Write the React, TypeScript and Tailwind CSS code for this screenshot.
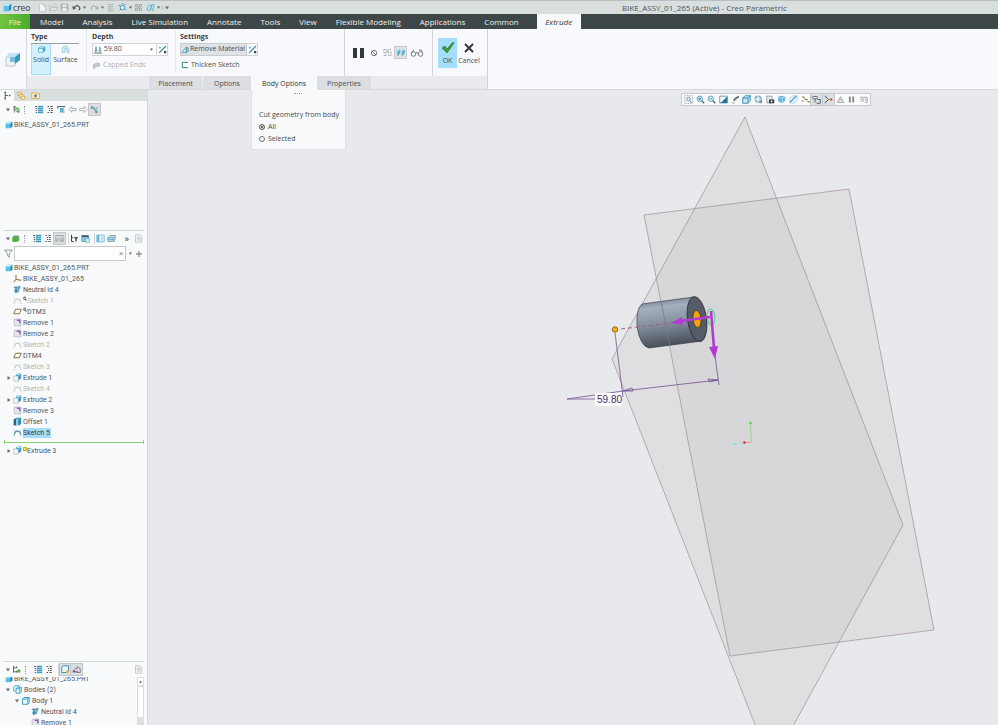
import type { ReactNode } from "react";
import clsx from "clsx";

const icons = {
  cube: (
    <>
      <path d="M1 4 4 1h7v7L8 11H1z" fill="#58bfe6" />
      <path d="M1 4 4 1h7L8 4z" fill="#c3eaf8" />
      <path d="M8 4l3-3v7l-3 3z" fill="#2b88b0" />
    </>
  ),
  cubeOutline: (
    <>
      <path d="M1.500 4.500 4 2h7v5.500L8.500 10h-7z" fill="#48abd2" />
      <path d="M2.500 5.500h5V9h-5z" fill="#fff" />
      <path d="M4.500 3h5L8 4.200H3.200z" fill="#d8f2fb" />
    </>
  ),
  sheet: (
    <path d="M1.500 10V4.500Q2 2 4.500 2H8l2.500 2.500V10H8V5H5v5z" fill="#d5eef7" stroke="#67b3ce" strokeWidth=".7" />
  ),
  newFile: <path d="M2 1h5l3 3v7H2zM7 1v3h3" fill="#f4f6f6" stroke="#b4b9b9" strokeWidth=".8" />,
  open: <path d="M1 10V4h3l1 1h5v1M1 10l2-4h8l-1.500 4zM7 3l2-2 1 2" fill="#e4e7e7" stroke="#adb3b3" strokeWidth=".8" />,
  save: (
    <>
      <path d="M1.500 1.500h9v9h-9z" fill="#b9bfc0" stroke="#959b9d" strokeWidth=".8" />
      <path d="M3.500 2h5v3h-5zM3 7h6v3.500H3z" fill="#eef0f0" />
    </>
  ),
  undo: (
    <>
      <path d="M3 6q3-4 6-1.500t0 5" fill="none" stroke="#444b4d" strokeWidth="1.600" />
      <path d="M.5 4l1 5 4-2.500z" fill="#444b4d" />
    </>
  ),
  redo: (
    <>
      <path d="M9 6q-3-4-6-1.500t0 5" fill="none" stroke="#a3a9aa" strokeWidth="1.300" />
      <path d="M11.500 4l-1 5-4-2.500z" fill="#a3a9aa" />
    </>
  ),
  regen: <path d="M2 2h3M7 2h3M2 5h3M7 5h3M2 8h3M7 8h3M2 10.500h8M6 2v8" stroke="#a7adaf" strokeWidth="1.100" />,
  gearView: (
    <>
      <circle cx="6" cy="6" r="3" fill="#e6f5fb" stroke="#369cc4" strokeWidth="1.300" />
      <path d="M1 3l2 1M9 8l2 1M2 10l2-2M8 3l2-2M5 1h2" stroke="#47727f" strokeWidth="1.100" />
    </>
  ),
  windows: <path d="M2 2h3v3H2zM7 2h3v3H7zM2 7h3v3H2zM7 7h3v3H7zM4 4l4 4" fill="none" stroke="#8a9192" strokeWidth=".9" />,
  planes: (
    <>
      <path d="M1 9l3-6h4L5 10zM6 8l2-6h3L9 9z" fill="#c3e7f5" stroke="#43a7cd" strokeWidth=".9" />
      <path d="M8 11l3-2" stroke="#be9440" />
    </>
  ),
  depth: (
    <>
      <path d="M3 1v7M9 1v7" stroke="#2b6f96" strokeWidth="1.600" />
      <path d="M0 10.500h12" stroke="#4b5559" strokeWidth="1.300" />
      <path d="M1 6.500l2 2 2-2M7 6.500l2 2 2-2" fill="none" stroke="#2b6f96" />
    </>
  ),
  flip: (
    <>
      <path d="M1.500 10.500l9-9" stroke="#2e7397" strokeWidth="1.500" />
      <path d="M1 3.500h3M2.500 2v3" stroke="#4badd3" />
      <path d="M8 8h3v3H8z" fill="#41484b" />
    </>
  ),
  wedge: (
    <>
      <path d="M1 10l7-8.500V10z" fill="#d6f0fa" stroke="#38819f" strokeWidth="1" />
      <path d="M8 1.500l3 1.500v5L8 10z" fill="#74c7e6" stroke="#38819f" strokeWidth=".7" />
    </>
  ),
  thicken: <path d="M10.500 2H2v8h8.500" fill="none" stroke="#39819e" strokeWidth="1.500" />,
  capped: (
    <>
      <path d="M2 5q3-3 8-2v4q-5-1-7 3z" fill="#c5cacc" stroke="#a5abad" strokeWidth=".8" />
      <path d="M2 5v5" stroke="#a5abad" />
    </>
  ),
  none: (
    <>
      <circle cx="6" cy="6" r="4" fill="none" stroke="#62686a" strokeWidth="1.300" />
      <path d="M3 3l6 6" stroke="#62686a" strokeWidth="1.300" />
    </>
  ),
  ghost: <path d="M1 2h4v4H1zM7 2h4M7 2v8M1 10h4M3 7v3M9 5h2v5H8M5 4l3 3" fill="none" stroke="#8d9395" strokeWidth="1" strokeDasharray="1.500 .7" />,
  preview: (
    <>
      <path d="M1 2h4v4L3 10H1l1-4H1zM7 2h4v4l-2 4H7l1-4H7z" fill="#58b9e2" />
      <path d="M1 2h3v2H1zM7 2h3v2H7z" fill="#c4ebf9" />
      <path d="M5 3v3L3 10M11 3v3l-2 4" fill="none" stroke="#247ca5" strokeWidth=".8" />
    </>
  ),
  filterTree: (
    <>
      <path d="M3 1v9M3 5l5 5" stroke="#5b6164" strokeWidth="1.200" />
      <path d="M2 1.500h3v2.500H2zM7 7h3v3H7z" fill="#7a8285" />
      <path d="M7 3l3 4" stroke="#4fb239" strokeWidth="1.600" />
      <circle cx="6" cy="5" r="1.300" fill="#56b63a" />
    </>
  ),
  tree: (
    <>
      <path d="M3 1v10M3 6h4" stroke="#5d6467" strokeWidth="1.300" />
      <path d="M2 2h2M2 10h2M8 6h2" stroke="#5d6467" strokeWidth="2" />
    </>
  ),
  folders: (
    <>
      <path d="M1 2h5v4H1z" fill="#fff0cb" stroke="#d59d35" />
      <path d="M3 4.500h5v4H3z" fill="#fff0cb" stroke="#d59d35" />
      <path d="M5.500 7h5v4h-5z" fill="#fff0cb" stroke="#d59d35" />
    </>
  ),
  favorite: (
    <>
      <path d="M1 2.500h4l1 1h5v6.500H1z" fill="#fff0cb" stroke="#d59d35" />
      <path d="M6 4.500v4M4 6.500h4" stroke="#377fa4" strokeWidth="1.800" />
    </>
  ),
  listBlue: (
    <>
      <path d="M4 2h7M4 4.700h7M4 7.300h7M4 10h7" stroke="#3b9cc2" strokeWidth="1.800" />
      <path d="M0 2h3M1 4.700h2M1 7.300h2M1 10h2" stroke="#525a5d" strokeWidth="1.300" />
    </>
  ),
  listDark: <path d="M2 2h2M6 2h3M4 4.700h1.500M6.500 4.700H9M4 7.300h1.500M6.500 7.300H9M2 10h2M6 10h3" stroke="#555c5f" strokeWidth="1.400" />,
  treeFind: (
    <>
      <path d="M1 2h10M1 2v3" stroke="#5c656a" strokeWidth="1.500" />
      <path d="M4 4h4v6H4z" fill="#56afd3" />
      <path d="M9 3v8" stroke="#7c8589" />
    </>
  ),
  back: <path d="M1 6l4-4v2.500h6v3H5V10z" fill="none" stroke="#999fa3" />,
  next: <path d="M11 6L7 2v2.500H1v3h6V10z" fill="none" stroke="#999fa3" />,
  pickTree: (
    <>
      <path d="M1 2h3v3H1zM7 8h3v3H7z" fill="#838a8d" />
      <path d="M4 3l5 6" stroke="#4ea4c5" strokeWidth="1.800" />
      <path d="M8 3q2 1 1 3" fill="none" stroke="#686f72" />
    </>
  ),
  greenBox: (
    <>
      <path d="M2 4l2-2h6l1 2v5l-1 1H2z" fill="#7e967b" />
      <path d="M2 4.500h6v6H2z" fill="#43bd2c" />
    </>
  ),
  settingsTree: (
    <>
      <path d="M1 2h10v8H1z" fill="#bfc4c7" stroke="#858c90" strokeWidth=".7" />
      <path d="M1 4h10M4 10h3" stroke="#fff" strokeWidth=".8" />
      <circle cx="9" cy="9" r="1.300" fill="#b7b0a2" />
    </>
  ),
  filterDown: (
    <>
      <path d="M2 1v9h3M2 5h2" fill="none" stroke="#343b3d" strokeWidth="1.300" />
      <path d="M5 4h6L9 7v3H7V7z" fill="#505759" />
    </>
  ),
  columns: (
    <>
      <path d="M1 2h9v8H1z" fill="#83c7e2" stroke="#3a819e" strokeWidth=".8" />
      <path d="M1 3h9" stroke="#48545a" strokeWidth="2" />
      <path d="M6 6h5v5H6z" fill="#d7edf5" stroke="#3b93b8" strokeWidth=".7" />
    </>
  ),
  panel: (
    <>
      <path d="M1 1.500h10v9H1z" fill="#eef9fd" stroke="#50a9ca" strokeWidth=".9" />
      <path d="M3 1.500v9" stroke="#59b1d1" strokeWidth="2.500" />
      <path d="M6 4h4M6 6h4M6 8h4" stroke="#a0a7aa" strokeWidth=".7" />
    </>
  ),
  layers: (
    <>
      <path d="M1 5l3-3h7L9 5zM1 5v5h8V5M9 10l2-3V2" fill="#bfe2ee" stroke="#668d9c" strokeWidth=".9" />
      <path d="M1 7.500h8" stroke="#4dabcf" strokeWidth="1.200" />
    </>
  ),
  doc: <path d="M2 1h6l2.500 2.500V11H2zM4 4h4M4 6h5M4 8h5" fill="#f3f4f5" stroke="#b2b7b9" strokeWidth=".9" />,
  funnel: <path d="M1 1.500h10L7 6.500V11L5 9.500v-3z" fill="#fff" stroke="#737a7d" strokeWidth="1" />,
  csys: <path d="M4 1v6l7 1.500M4 7l-3 4" fill="none" stroke="#a07a3c" strokeWidth="1.400" />,
  neutral: (
    <>
      <path d="M2 5q3-3 9-4-3 4-4 9H2z" fill="#73c2e0" />
      <path d="M1 3h5M2 8h6M4 2v9M8 1v5" stroke="#39758d" strokeWidth="1.200" />
    </>
  ),
  sketch: (
    <>
      <path d="M2 8.500Q2.500 4 6 4t4 4.500" fill="none" stroke="#b9b8ae" strokeWidth="1.200" />
      <path d="M1 3l1.500 1M11 3L9.500 4M.5 10h2M9.500 10h2" stroke="#c8c6b9" />
    </>
  ),
  sketchOn: (
    <>
      <path d="M2 8.500Q2.500 4 6 4t4 4.500" fill="none" stroke="#2c7698" strokeWidth="1.400" />
      <path d="M1 3l1.500 1M11 3L9.500 4M.5 10h2M9.500 10h2" stroke="#6aa9c4" />
    </>
  ),
  plane: <path d="M3.500 3H11L8.500 9H1z" fill="none" stroke="#8f6f38" strokeWidth="1.300" />,
  remove: (
    <>
      <path d="M1.500 1.500h9v9h-9z" fill="#e7e4ed" stroke="#b9b3c6" />
      <path d="M5 2h5v5H8V4H5z" fill="#8c5ec0" />
    </>
  ),
  extrude: (
    <>
      <path d="M1 4h6v7H1z" fill="#f4f6f7" stroke="#9ba5aa" strokeWidth=".7" />
      <path d="M4 2l2-1.500h5V7L9 9H7V4H4z" fill="#3f9fc6" />
      <path d="M4 3l2-2h5L9 3z" fill="#b6e3f2" />
    </>
  ),
  offset: (
    <>
      <path d="M1 3l3-2h7v8l-2 2H1z" fill="#4ba4c8" />
      <path d="M1 3h3v8H1z" fill="#1c6786" />
      <path d="M7 3l3-2v8l-3 2z" fill="#2f86a8" />
      <path d="M4 3h3v8H4z" fill="#91cee4" />
    </>
  ),
  bodies: <path d="M1 3l1.500-2H8v2M1 3v5h2M4 5l2-2h5v6l-2 2H4zM4 5h5v6M9 5l2-2" fill="#e9f7fc" stroke="#3298c0" strokeWidth="1.100" />,
  body: <path d="M2 4l2-2h7v7l-2 2H2zM2 4h7v7M9 4l2-2" fill="#ecf9fd" stroke="#3298c0" strokeWidth="1.200" />,
  bodyTree: (
    <>
      <path d="M2 1v9M2 4h3M2 9h3" stroke="#555c5f" strokeWidth="1.200" />
      <path d="M5 3h2M5 9h2" stroke="#555c5f" strokeWidth="2" />
      <path d="M7 6h4v4H7z" fill="#4cb33a" />
    </>
  ),
  bodyGear: (
    <>
      <path d="M1 3l2-2h7v7l-2 2H1z" fill="#e8f7fc" stroke="#378ead" strokeWidth="1.200" />
      <circle cx="8.500" cy="9" r="2" fill="#e8ae4c" />
    </>
  ),
  arrowGear: (
    <>
      <path d="M3 5h4V2l4 3v5H6" fill="#e2dbec" stroke="#606770" />
      <path d="M1 7h3v3H1z" fill="#7f519f" />
      <path d="M4 9h4" stroke="#7f519f" strokeWidth="1.400" />
    </>
  ),
  refit: (
    <>
      <path d="M1 1h10v10H1z" fill="none" stroke="#82898c" strokeWidth=".9" strokeDasharray="2 1" />
      <circle cx="6" cy="5.500" r="2.500" fill="#d8eff7" stroke="#508ba2" />
      <path d="M8 8l2.500 2.500" stroke="#50585b" />
    </>
  ),
  zoomIn: (
    <>
      <circle cx="5" cy="5" r="3.600" fill="#e7f7fc" stroke="#3a8fb3" strokeWidth="1.100" />
      <path d="M7.500 7.500L11 11" stroke="#4a5558" strokeWidth="1.500" />
      <path d="M3 5h4M5 3v4" stroke="#247ba2" strokeWidth="1.100" />
    </>
  ),
  zoomOut: (
    <>
      <circle cx="5" cy="5" r="3.600" fill="#e7f7fc" stroke="#3a8fb3" strokeWidth="1.100" />
      <path d="M7.500 7.500L11 11" stroke="#4a5558" strokeWidth="1.500" />
      <path d="M3 5h4" stroke="#247ba2" strokeWidth="1.100" />
    </>
  ),
  repaint: (
    <>
      <path d="M1 1.500h10v9H1z" fill="#fff" stroke="#2f81a2" />
      <path d="M11 2v8.500H2z" fill="#286f91" />
    </>
  ),
  brush: (
    <>
      <path d="M10.500 2L6 4.500" stroke="#555b5e" strokeWidth="2.200" />
      <path d="M7 4L3.500 7.500" stroke="#7b8184" strokeWidth="3" />
      <path d="M1 10.500h4" stroke="#9aa0a3" strokeWidth="1.200" />
    </>
  ),
  orient: <path d="M1 4l3-3h7v7l-3 3H1zM1 4h7v7M8 4l3-3" fill="#c4e8f5" stroke="#267fa4" strokeWidth="1.100" />,
  globe: (
    <>
      <circle cx="5.500" cy="5.500" r="4.300" fill="#a9dcf0" stroke="#378dae" />
      <path d="M1 6h8M5.500 1v9" stroke="#fff" />
      <path d="M7 7h4v4H7z" fill="#8f979a" />
    </>
  ),
  camera: (
    <>
      <path d="M1 1.500h7v9H1z" fill="#e6eaec" stroke="#858d91" />
      <path d="M4 6h7v5H4z" fill="#34393b" />
      <circle cx="7.500" cy="8.500" r="1.200" fill="#fff" />
    </>
  ),
  appearance: (
    <>
      <path d="M1 3l3-2 7 1v5L7 11 2 9z" fill="#64b7d9" />
      <path d="M1 3l6 1 4-2M7 4v7" fill="none" stroke="#c9edf8" strokeWidth=".8" />
    </>
  ),
  section: (
    <>
      <path d="M1 4l3-3h7v7l-3 3H1z" fill="#def2f9" stroke="#a1ccdc" strokeWidth=".7" />
      <path d="M1 10l9-9" stroke="#267fa5" strokeWidth="1.400" />
    </>
  ),
  datum: (
    <>
      <path d="M1.500 1.500l9 9M1.500 9.500l5-5" stroke="#b18a49" strokeWidth="1.200" strokeDasharray="2 1" />
      <path d="M2 3h3M6 6h3M1 8h2M9 9h3" stroke="#8a7443" strokeWidth="1.600" />
    </>
  ),
  annotate: (
    <>
      <path d="M1 2h6v3H1z" fill="#fff" stroke="#4e5659" />
      <path d="M7 6h4v5H6M4 5v5" fill="none" stroke="#4e5659" strokeWidth="1.200" />
    </>
  ),
  spin: (
    <>
      <path d="M2 2l4 4-4 4" fill="none" stroke="#474f53" strokeWidth="1.200" />
      <path d="M5 6h4" stroke="#47a34a" strokeWidth="1.200" />
      <path d="M1 1h2v2H1zM1 9h2v2H1z" fill="#4a8fb0" />
      <circle cx="9.500" cy="6" r="1.600" fill="#d65151" />
    </>
  ),
  warn: <path d="M6 2l4.500 8h-9zM4 9l2-4 2 4" fill="none" stroke="#9da3a6" strokeWidth="1.100" />,
  pause: <path d="M2.500 2h2.500v8H2.500zM7 2h2.500v8H7z" fill="#858b8e" />,
  exit: <path d="M1 3h10v7H8M2 5.500h5M2 8h5M9 5v3" fill="none" stroke="#9da3a6" strokeWidth="1.200" />,
};

type IconName = keyof typeof icons;

const Icon = ({ name, className = "size-[9px]" }: { name: IconName; className?: string }) => (
  <svg viewBox="0 0 12 12" className={clsx("shrink-0", className)} aria-hidden>
    {icons[name]}
  </svg>
);

const Caret = ({ open = true }: { open?: boolean }) => (
  <svg viewBox="0 0 4 4" className="size-1 shrink-0" aria-hidden>
    <path d={open ? "M0 .5h4L2 3.500z" : "M.5 0v4L3.500 2z"} fill="#666c70" />
  </svg>
);

const SmallCaret = () => (
  <svg viewBox="0 0 4 4" className="size-[3px] shrink-0" aria-hidden>
    <path d="M0 .5h4L2 3.500z" fill="#596063" />
  </svg>
);

type ToolProps = { name: IconName; label: string; active?: boolean };

const Tool = ({ name, label, active }: ToolProps) => (
  <button
    aria-label={label}
    className={clsx(
      "flex h-[11px] w-[11px] shrink-0 items-center justify-center",
      active && "bg-[#dcdfe2] outline outline-[#c3c7ca]"
    )}
  >
    <Icon name={name} />
  </button>
);

const menus = [
  "Model",
  "Analysis",
  "Live Simulation",
  "Annotate",
  "Tools",
  "View",
  "Flexible Modeling",
  "Applications",
  "Common",
];

const TitleBar = () => (
  <header className="relative flex h-[14px] shrink-0 items-center border-t border-[#b9c0c0] bg-[#d9dfdf] pl-[3px]">
    <Icon name="cube" />
    <span className="w-[25px] pl-px font-['Lato'] text-[9px] leading-[12px] text-[#3f484b]">creo</span>
    <div className="flex items-center">
      <Tool name="newFile" label="New" />
      <Tool name="open" label="Open" />
      <Tool name="save" label="Save" />
      <button aria-label="Undo" className="flex w-[18px] items-center justify-center gap-[2px]">
        <Icon name="undo" />
        <SmallCaret />
      </button>
      <button aria-label="Redo" className="flex w-[17px] items-center justify-center gap-[2px]">
        <Icon name="redo" />
        <SmallCaret />
      </button>
      <Tool name="regen" label="Regenerate" />
      <button aria-label="Display" className="flex w-[17px] items-center justify-center gap-[2px]">
        <Icon name="gearView" />
        <SmallCaret />
      </button>
      <Tool name="windows" label="Windows" />
      <button aria-label="Planes" className="flex w-[18px] items-center justify-center gap-[2px]">
        <Icon name="planes" />
        <SmallCaret />
      </button>
      <button aria-label="Customize" className="border-l border-[#b9c0c0] pl-[2px]">
        <Caret />
      </button>
    </div>
    <h1 className="absolute left-[622px] text-[8px] leading-[12px] text-[#4b5457]">
      BIKE_ASSY_01_265 (Active) - Creo Parametric
    </h1>
  </header>
);

const MenuBar = () => (
  <nav className="flex h-[15px] shrink-0 items-stretch bg-[#3d4747] text-[8px] leading-[15px] text-[#eef1f1]">
    <button className="mr-px w-[30px] bg-linear-to-r from-[#72c341] to-[#48ad2b]">File</button>
    {menus.map((menu) => (
      <button key={menu} className="pr-[10px] pl-[9px]">
        {menu}
      </button>
    ))}
    <button className="ml-2 w-[44px] bg-[#f8f9fc] text-[#32393b] italic">Extrude</button>
  </nav>
);

const GroupTitle = ({ children }: { children: ReactNode }) => (
  <h2 className="mb-px h-[13px] leading-[15px] font-bold text-[#3b4144]">{children}</h2>
);

const Ribbon = () => (
  <section className="flex h-[61px] shrink-0 border-b border-[#d6d9dc] bg-[#f8f9fc] text-[7px] text-[#484e51]">
    <div className="flex w-[27px] items-center justify-center border-r border-[#d6d8db]">
      <svg viewBox="0 0 16 16" className="size-4" aria-hidden>
        <path d="M1 6h9v9H1z" fill="#f0f2f3" stroke="#aab1b5" strokeWidth=".7" />
        <path d="M1 6l3-4h11l-4 4z" fill="#c1e6f2" />
        <path d="M10 6l5-4v7l-5 4z" fill="#3b95b8" />
        <path d="M5 6h5v5H5z" fill="#71bfdc" />
      </svg>
    </div>
    <div className="flex w-[461px] flex-col border-r border-[#cfd2d5]">
      <div className="flex h-[47px]">
        <div className="w-[59px] pl-1">
          <GroupTitle>Type</GroupTitle>
          <div className="flex w-[48px] gap-px border-t border-[#979da0] leading-[10px]">
            <button className="flex h-[31px] w-[20px] flex-col items-center border border-t-0 border-[#a9dcf2] bg-[#d3f0fd] pt-px">
              <Icon name="cubeOutline" className="mb-px size-[9px]" />
              Solid
            </button>
            <button className="flex h-[31px] w-[27px] flex-col items-center pt-px">
              <Icon name="sheet" className="mb-px size-[9px]" />
              Surface
            </button>
          </div>
        </div>
        <div className="mb-1 w-[90px] border-x border-[#e5e7ea] pl-[5px]">
          <GroupTitle>Depth</GroupTitle>
          <div className="flex h-[13px] w-[76px] border border-[#d2d5d8] bg-white">
            <button aria-label="Depth option" className="flex w-[10px] items-center justify-center">
              <Icon name="depth" className="size-2" />
            </button>
            <input aria-label="Depth value" defaultValue="59.80" className="w-[48px] min-w-0 pl-px outline-none" />
            <button aria-label="Depth values" className="flex w-[6px] items-center"><SmallCaret /></button>
            <button aria-label="Flip depth direction" className="flex w-[11px] items-center justify-center border-l border-[#d2d5d8]">
              <Icon name="flip" />
            </button>
          </div>
          <button disabled className="mt-[3px] flex h-[12px] items-center gap-[2px] text-[#afb3b6]">
            <Icon name="capped" />
            Capped Ends
          </button>
        </div>
        <div className="w-[168px] pl-1">
          <GroupTitle>Settings</GroupTitle>
          <div className="flex h-[13px]">
            <button className="flex w-[67px] items-center gap-px border border-[#c9cccf] bg-[#dfe1e4] whitespace-nowrap">
              <Icon name="wedge" className="size-2" />
              Remove Material
            </button>
            <button aria-label="Flip material side" className="flex w-[11px] items-center justify-center border border-l-0 border-[#d2d5d8]">
              <Icon name="flip" />
            </button>
          </div>
          <button className="mt-[3px] flex h-[12px] items-center gap-[2px]">
            <Icon name="thicken" className="ml-px size-2" />
            Thicken Sketch
          </button>
        </div>
        <div className="flex w-[89px] items-center gap-[2px] border-x border-[#d2d5d8] pl-[8px]">
          <button aria-label="Pause" className="mr-1 flex h-[10px] gap-[3px]">
            <i className="w-1 bg-[#33393b]" />
            <i className="w-1 bg-[#33393b]" />
          </button>
          <button aria-label="No preview"><Icon name="none" className="size-2" /></button>
          <span className="w-px" />
          <button aria-label="Unattached preview"><Icon name="ghost" /></button>
          <button aria-label="Attached preview" className="border border-[#c5cacd] bg-[#dfe3e6] p-px">
            <Icon name="preview" />
          </button>
          <button aria-label="Verify" className="ml-px">
            <svg viewBox="0 0 14 8" className="h-[8px] w-[14px]" aria-hidden>
              <g fill="none" stroke="#687074" strokeWidth=".9">
                <circle cx="3.500" cy="5" r="2.300" />
                <circle cx="10.500" cy="5" r="2.300" />
                <path d="M6 4q1-1 2 0M1 4l3-3M12.500 3L11 1H9" />
              </g>
            </svg>
          </button>
        </div>
        <div className="flex items-start pt-[9px] pl-[5px] leading-[9px]">
          <button className="flex h-[30px] w-[19px] flex-col items-center bg-[#a4defa] pt-[3px]">
            <svg viewBox="0 0 14 14" className="mb-px size-[14px]" aria-hidden>
              <path d="M1 7l3-2 2 3 6-7 1 1-7 10z" fill="#3c9a35" stroke="#277026" strokeWidth=".6" />
            </svg>
            OK
          </button>
          <button className="flex h-[30px] w-[24px] flex-col items-center pt-[3px]">
            <svg viewBox="0 0 14 14" className="mb-px size-[14px]" aria-hidden>
              <path d="M3 3l8 8M11 3l-8 8" stroke="#32383b" strokeWidth="2" />
            </svg>
            Cancel
          </button>
        </div>
      </div>
      <div className="flex h-[13px] bg-[#e8eaed] pl-[122px] leading-[15px]">
        <button className="w-[54px] border-r border-[#eff0f2] bg-[#dcdee1]">Placement</button>
        <button className="w-[48px] bg-[#dcdee1]">Options</button>
        <button className="h-[14px] w-[66px] bg-[#f8f9fc] text-[#2f3537]">Body Options</button>
        <button className="w-[54px] bg-[#dcdee1]">Properties</button>
      </div>
    </div>
  </section>
);

type Row = {
  icon: IconName;
  label: string;
  muted?: boolean;
  link?: boolean;
  mark?: boolean;
  expand?: boolean;
  selected?: boolean;
};

const features: Row[] = [
  { icon: "csys", label: "BIKE_ASSY_01_265" },
  { icon: "neutral", label: "Neutral id 4" },
  { icon: "sketch", label: "Sketch 1", muted: true, link: true },
  { icon: "plane", label: "DTM3", link: true },
  { icon: "remove", label: "Remove 1" },
  { icon: "remove", label: "Remove 2" },
  { icon: "sketch", label: "Sketch 2", muted: true },
  { icon: "plane", label: "DTM4" },
  { icon: "sketch", label: "Sketch 3", muted: true },
  { icon: "extrude", label: "Extrude 1", expand: true },
  { icon: "sketch", label: "Sketch 4", muted: true },
  { icon: "extrude", label: "Extrude 2", expand: true },
  { icon: "remove", label: "Remove 3" },
  { icon: "offset", label: "Offset 1" },
  { icon: "sketchOn", label: "Sketch 5", selected: true },
];

const FeatureRow = ({ icon, label, muted, link, mark, expand, selected }: Row) => (
  <li className="flex h-[11px] items-center pl-[7px]">
    <span className="flex w-[6px]">{expand && <Caret open={false} />}</span>
    <Icon name={icon} />
    {link && (
      <svg viewBox="0 0 5 7" className="mb-1 ml-px h-[6px] w-1" aria-hidden>
        <path d="M1 1h2v3H1zM3 3l1 3" fill="none" stroke="#555b5e" />
      </svg>
    )}
    {mark && <i className="mb-1 ml-px size-[4px] border border-[#c3b52b] bg-[#efe43a]" />}
    <button
      className={clsx(
        "h-[10px] whitespace-nowrap",
        !link && !mark && "ml-px",
        muted && "text-[#b9b4a3]",
        selected && "bg-[#a5def8] pr-px text-[#333d42]"
      )}
    >
      {label}
    </button>
  </li>
);

const RootRow = () => (
  <button className="flex h-[11px] items-center gap-px pl-[5px] whitespace-nowrap">
    <Icon name="cube" className="size-2" />
    BIKE_ASSY_01_265.PRT
  </button>
);

const Dots = () => <i className="h-[8px] w-px border-l border-dotted border-[#9ba1a4]" />;

const Sidebar = () => (
  <aside className="flex w-[148px] shrink-0 flex-col border-r border-[#d3d9da] bg-[#f8fafc] font-['Roboto','Open_Sans',sans-serif] text-[7px] leading-[10px] text-[#50565a]">
    <div className="flex h-[11px] shrink-0 bg-[#d8dfdf]">
      <button aria-label="Model Tree" className="flex w-[14px] items-center justify-center bg-[#f8fafc]">
        <Icon name="tree" />
      </button>
      <button aria-label="Folder Browser" className="flex w-[14px] items-center justify-center"><Icon name="folders" /></button>
      <button aria-label="Favorites" className="flex w-[14px] items-center justify-center"><Icon name="favorite" /></button>
    </div>
    <section className="h-[129px] shrink-0">
      <div className="flex h-[17px] items-center pl-[6px]">
        <Caret />
        <span className="w-px" />
        <Tool name="filterTree" label="Tree filter" />
        <span className="w-[2px]" />
        <Dots />
        <div className="ml-[9px] flex">
          <Tool name="listBlue" label="Expand all" />
          <Tool name="listDark" label="Collapse all" />
          <Tool name="treeFind" label="Find" />
          <Tool name="back" label="Previous" />
          <Tool name="next" label="Next" />
          <Tool name="pickTree" label="Auto locate" active />
        </div>
      </div>
      <div className="pt-px">
        <RootRow />
      </div>
    </section>
    <section className="ml-1 mr-[3px] flex-1 border-t border-[#cfd8d8]">
      <div className="flex h-[15px] items-center pl-[2px]">
        <Caret />
        <Tool name="greenBox" label="Model tree" />
        <span className="w-[3px]" />
        <Dots />
        <div className="ml-[7px] flex">
          <Tool name="listBlue" label="Expand tree" />
          <Tool name="listDark" label="Collapse tree" />
          <Tool name="settingsTree" label="Tree settings" active />
        </div>
        <div className="ml-[3px] flex border-l border-[#cdd2d4]">
          <Tool name="filterDown" label="Filter items" />
          <Tool name="columns" label="Tree columns" />
        </div>
        <div className="ml-[3px] flex border-l border-[#cdd2d4]">
          <Tool name="panel" label="Side panel" />
          <Tool name="layers" label="Layers" />
        </div>
        <button aria-label="More" className="mr-1 ml-auto text-[9px] leading-[8px] font-bold">»</button>
        <Tool name="doc" label="Properties" />
      </div>
      <div className="flex h-[15px] items-center gap-px">
        <Icon name="funnel" />
        <div className="flex h-[15px] w-[112px] items-center border border-[#c4c9cb] bg-white">
          <input aria-label="Filter tree" className="w-[104px] min-w-0 outline-none" />
          <button aria-label="Clear filter" className="text-[8px] text-[#8b9193]">×</button>
        </div>
        <button aria-label="Filter history" className="mx-[2px]"><SmallCaret /></button>
        <button aria-label="Add filter" className="ml-px">
          <svg viewBox="0 0 8 8" className="size-[6px]" aria-hidden>
            <path d="M0 4h8M4 0v8" stroke="#8d9497" strokeWidth="1.800" />
          </svg>
        </button>
      </div>
      <div className="-ml-1 pt-px">
        <RootRow />
        <ul>
          {features.map((row) => (
            <FeatureRow key={row.label} {...row} />
          ))}
        </ul>
        <div className="mt-[2px] ml-1 flex h-[4px] items-center border-x border-[#8cd57c]">
          <i className="h-px w-full bg-[#86d375]" />
        </div>
        <ul className="mt-px">
          <FeatureRow icon="extrude" label="Extrude 3" expand mark />
        </ul>
      </div>
    </section>
    <section className="ml-1 mr-[3px] h-[64px] shrink-0 overflow-hidden border-t border-[#cfd8d8]">
      <div className="flex h-[15px] items-center pl-[2px]">
        <Caret />
        <span className="w-px" />
        <Tool name="bodyTree" label="Body tree" />
        <span className="w-[3px]" />
        <Dots />
        <div className="ml-[7px] flex">
          <Tool name="listBlue" label="Expand bodies" />
          <Tool name="listDark" label="Collapse bodies" />
        </div>
        <div className="ml-[3px] flex border-l border-[#cdd2d4] pl-px">
          <Tool name="bodyGear" label="Show bodies" active />
          <Tool name="arrowGear" label="Show contributors" active />
        </div>
        <span className="flex-1" />
        <Tool name="doc" label="Body properties" />
      </div>
      <div className="flex h-[48px] overflow-hidden">
        <div className="-mt-[4px] -ml-1 flex-1">
          <RootRow />
          <ul>
            <li className="flex h-[11px] items-center gap-[2px] pl-[6px]"><Caret /><Icon name="bodies" className="ml-px size-[9px]" />Bodies (2)</li>
            <li className="flex h-[11px] items-center gap-[2px] pl-[15px]"><Caret /><Icon name="body" />Body 1</li>
            <li className="flex h-[11px] items-center gap-px pl-[31px]"><Icon name="neutral" />Neutral id 4</li>
            <li className="flex h-[11px] items-center gap-px pl-[31px]"><Icon name="remove" />Remove 1</li>
          </ul>
        </div>
        <div className="flex w-[7px] flex-col border border-[#dadde0] bg-[#dfe2e4]">
          <button aria-label="Scroll up" className="mb-[2px] flex h-[7px] shrink-0 rotate-180 items-center justify-center bg-white"><SmallCaret /></button>
          <i className="h-[30px] bg-white" />
        </div>
      </div>
    </section>
  </aside>
);

const viewTools: ToolProps[] = [
  { name: "refit", label: "Refit" },
  { name: "zoomIn", label: "Zoom In" },
  { name: "zoomOut", label: "Zoom Out" },
  { name: "repaint", label: "Repaint" },
  { name: "brush", label: "Rendering" },
  { name: "orient", label: "Display Style" },
  { name: "globe", label: "Saved Orientations" },
  { name: "camera", label: "View Manager" },
  { name: "appearance", label: "Appearances" },
  { name: "section", label: "Section" },
  { name: "datum", label: "Datum Display" },
  { name: "annotate", label: "Annotation Display", active: true },
  { name: "spin", label: "Spin Center", active: true },
  { name: "warn", label: "Simulation" },
  { name: "pause", label: "Pause Simulation" },
  { name: "exit", label: "Exit" },
];

// model space drawing, units are window pixels from the top left corner
const Scene = () => (
  <svg viewBox="148 90 850 635" preserveAspectRatio="xMinYMin meet" className="block w-full" role="img" aria-label="Extrude preview">
    <defs>
      <linearGradient id="steel" x1="0" y1="0" x2=".18" y2="1">
        <stop offset="0" stopColor="#606a78" />
        <stop offset=".25" stopColor="#a3afbf" />
        <stop offset=".55" stopColor="#8792a1" />
        <stop offset="1" stopColor="#484f5b" />
      </linearGradient>
    </defs>
    <path d="M745 117L612 359L765 750L780 750L903 525z" fill="#846e6c" fillOpacity=".08" stroke="#a08e90" strokeWidth=".7" />
    <path d="M644 215L849 189L934 630L730 656z" fill="#846e6c" fillOpacity=".08" stroke="#a08e90" strokeWidth=".7" />

    <path d="M642 304L694 297Q707 308 706 326Q706 339 702 341L649 348Q640 346 637 326Q636 309 642 304z" fill="url(#steel)" stroke="#39404b" strokeWidth=".7" />
    <ellipse cx="697" cy="319" rx="9.500" ry="22.500" transform="rotate(-8 697 319)" fill="#555b67" stroke="#292e36" strokeWidth=".8" />
    <ellipse cx="697" cy="319" rx="4" ry="8.700" transform="rotate(-6 697 319)" fill="#f7a30d" stroke="#433928" strokeWidth=".8" />
    <path d="M661 301L670 346" stroke="#80767e" strokeWidth=".8" />
    <path d="M621 329L671 323" stroke="#a6537c" strokeWidth=".9" strokeDasharray="4 3" />
    <ellipse cx="711" cy="317" rx="3.800" ry="8" transform="rotate(-5 711 317)" fill="none" stroke="#54d48b" strokeWidth="1.100" />

    <g stroke="#745293" strokeWidth=".8" fill="none">
      <path d="M615 333L623 397M715 356L719 385M623 391L718 380M567 399L623 391M567 399L596 399" />
      <path d="M623 391l9-3 1 3zM718 380l-10-1 1 3z" />
    </g>
    <circle cx="615" cy="329.500" r="2.700" fill="#f3b413" stroke="#926618" />

    <path d="M710 317L681 321" stroke="#b33ad2" strokeWidth="2.300" />
    <path d="M671 323l11-6 1 8z" fill="#b33ad2" />
    <path d="M711 311L714 348" stroke="#b33ad2" strokeWidth="2.600" />
    <path d="M715 359l-6-12 9-1z" fill="#b33ad2" />

    <path d="M595 393h27v13h-27z" fill="#fff" />
    <text x="597" y="403" fontFamily="Liberation Sans, sans-serif" fontSize="10" fill="#452865">59.80</text>

    <path d="M751.500 442L750.500 424" stroke="#86e27c" strokeWidth=".9" />
    <circle cx="750.500" cy="423" r="1.200" fill="#2fe62a" />
    <path d="M751 442.500h-6" stroke="#d89497" />
    <circle cx="744.500" cy="442.500" r="1.300" fill="#f0242c" />
    <path d="M735 443.800l8-1" stroke="#a6dfe2" strokeWidth=".8" />
    <circle cx="734.500" cy="444" r="1" fill="#52f0f0" />
  </svg>
);

const Canvas = () => (
  <main className="relative min-w-0 flex-1 overflow-hidden bg-[#e8e9ed]">
    <Scene />
    <div className="absolute top-[3px] left-[533px] flex h-[13px] w-[190px] items-center justify-between border border-[#c8cbce] bg-[#fafbfc] px-px">
      {viewTools.map((tool) => (
        <Tool key={tool.name} {...tool} />
      ))}
    </div>
    <fieldset className="absolute top-0 left-[103px] w-[95px] border border-t-0 border-[#dfe1e4] bg-[#f8f9fb] pt-[19px] pr-1 pb-1 pl-[7px] text-[7px] leading-[12px] whitespace-nowrap text-[#45494c]">
      <i className="absolute top-[3px] left-[42px] w-[8px] border-t border-dotted border-[#969b9e]" />
      <legend className="float-left w-full">Cut geometry from body</legend>
      {["All", "Selected"].map((option) => (
        <label key={option} className="clear-both flex h-[12px] items-center gap-[3px]">
          <input
            type="radio"
            name="cut"
            defaultChecked={option === "All"}
            className="size-[6px] appearance-none rounded-full border border-[#6b7174] bg-white checked:bg-[#363b3e] checked:ring-1 checked:ring-white checked:ring-inset"
          />
          {option}
        </label>
      ))}
    </fieldset>
  </main>
);

const App = () => (
  <div className="flex h-screen flex-col overflow-hidden font-['Open_Sans','Noto_Sans',sans-serif]">
    <TitleBar />
    <MenuBar />
    <Ribbon />
    <div className="flex min-h-0 flex-1">
      <Sidebar />
      <Canvas />
    </div>
  </div>
);

export default App;
